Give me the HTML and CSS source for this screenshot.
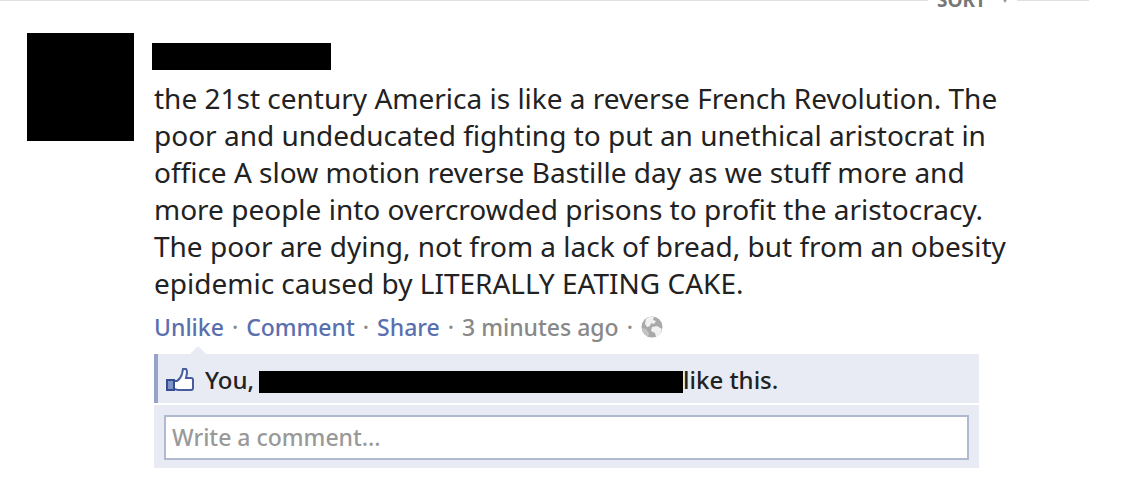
FILE: index.html
```html
<!DOCTYPE html>
<html lang="en">
<head>
<meta charset="utf-8">
<meta name="viewport" content="width=device-width, initial-scale=1">
<title>News feed</title>
<link rel="stylesheet" href="styles.css">
</head>
<body>
<header class="sortbar">
  <span class="rule rule-start"></span>
  <button class="sort" type="button">SORT
    <svg class="caret" viewBox="0 0 8 6" aria-hidden="true"><path d="M1 0h6L4 5z" fill="#999"/></svg>
  </button>
  <span class="rule rule-end"></span>
</header>
<article class="post">
  <div class="avatar"></div>
  <div class="body">
    <div class="name"></div>
    <p class="message">the 21st century America is like a reverse French Revolution. The<br>
      poor and undeducated fighting to put an unethical aristocrat in<br>
      office A slow motion reverse Bastille day as we stuff more and<br>
      more people into overcrowded prisons to profit the aristocracy.<br>
      The poor are dying, not from a lack of bread, but from an obesity<br>
      epidemic caused by LITERALLY EATING CAKE.</p>
    <div class="actions">
      <a href="#">Unlike</a><span>·</span><a href="#">Comment</a><span>·</span><a href="#">Share</a><span>·</span><span>3 minutes ago</span><span>·</span>
      <svg class="globe" viewBox="0 0 22 22" role="img" aria-label="Public">
        <circle cx="11" cy="11" r="10.5" fill="#a9a9a9"/>
        <path d="M5 3Q8 0 13 1l-1 3 3 1-2 3-3-1-1 3-3 1-2-3zM11 11l5-1 5 3-2 5-4 3-1-4-4-2z" fill="#f1f1f1"/>
        <path d="M1 12l4 1 3 4-1 4Q2 18 1 12z" fill="#c4c4c4"/>
      </svg>
    </div>
    <section class="feedback">
      <div class="likes">
        <svg class="thumb" viewBox="0 0 28 25" aria-hidden="true">
          <path d="M8 14h3q4-3 5-7l1-5h3q1 1 1 4l-1 5h5q2 0 2 2v8q0 2-2 2H12l-4-1z" fill="#fff" stroke="#465c9c" stroke-width="2"/>
          <path d="M1 13h7v10H1z" fill="#7f93cb" stroke="#354d91" stroke-width="2"/>
        </svg>
        <span class="you">You,</span><span class="hidden-names"></span><span>like this.</span>
      </div>
      <form class="comment">
        <input class="field" type="text" aria-label="Write a comment" placeholder="Write a comment...">
      </form>
    </section>
  </div>
</article>
</body>
</html>
```
FILE: styles.css
```css
* { box-sizing: border-box; }
body {
  margin: 0;
  background: #fff;
  color: #222;
  font-family: "Noto Sans", "Open Sans", sans-serif;
  font-size: 24px;
  overflow: hidden;
}
.sortbar {
  display: flex;
  height: 8px;
  padding-right: 47px;
}
.rule { height: 1px; background: #e0e0e0; }
.rule-start { flex: 1; }
.rule-end { width: 72px; }
.sort {
  display: flex;
  align-items: flex-end;
  justify-content: space-between;
  width: 89px;
  height: 8px;
  padding: 0 8px 0 9px;
  border: 0;
  background: none;
  color: #777;
  font: bold 19px/16px "Noto Sans", sans-serif;
}
.caret { width: 8px; height: 6px; margin-bottom: 4px; }
.post {
  display: flex;
  gap: 20px;
  padding: 25px 100px 8px 27px;
}
.avatar { flex: none; width: 107px; height: 108px; background: #000; }
.body { flex: 1; min-width: 0; padding-top: 10px; }
.name { width: 179px; height: 27px; margin-left: -2px; background: #000; }
.message {
  margin: 10px 0 0;
  font-size: 28px;
  font-weight: 450;
  line-height: 37px;
  white-space: nowrap;
}
.actions {
  display: flex;
  align-items: center;
  gap: 8px;
  height: 52px;
  padding-bottom: 2px;
  color: #888;
  font-size: 23px;
  font-weight: 500;
  white-space: nowrap;
}
.actions a { color: #5a6fae; text-decoration: none; }
.globe { width: 22px; height: 22px; }
.feedback { position: relative; max-width: 825px; }
.feedback::before {
  content: "";
  position: absolute;
  left: 36px;
  top: -8px;
  border: 8px solid transparent;
  border-top: 0;
  border-bottom-color: #e8ebf3;
}
.likes {
  display: flex;
  align-items: center;
  height: 49px;
  padding: 2px 8px 0;
  border-left: 4px solid #98a3cb;
  background: #e8ebf3;
  font-weight: 500;
  white-space: nowrap;
}
.thumb { width: 28px; height: 25px; }
.you { width: 54px; margin-left: 11px; }
.hidden-names { width: 424px; height: 22px; margin-top: 4px; background: #000; }
.comment { margin-top: 2px; padding: 10px 10px 8px; background: #e8ebf3; }
.field {
  display: block;
  width: 100%;
  height: 45px;
  padding: 0 6px 2px;
  border: 2px solid #afbad1;
  border-radius: 0;
  background: #fff;
  color: #222;
  font: 500 23px "Noto Sans", sans-serif;
}
.field::placeholder { color: #999; opacity: 1; }
```
